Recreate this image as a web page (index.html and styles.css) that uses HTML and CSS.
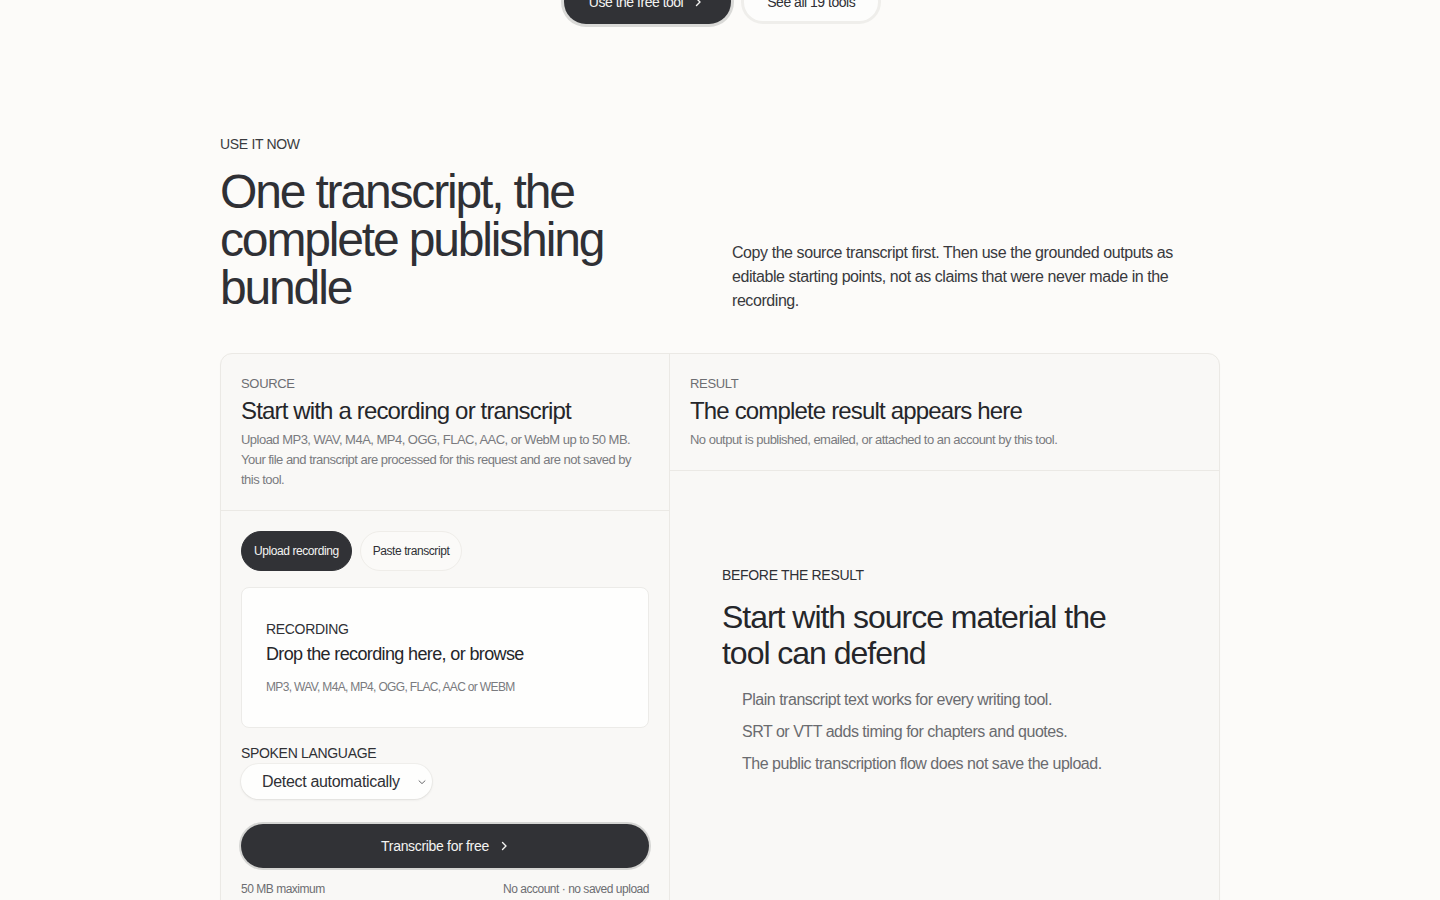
FILE: index.html
```html
<!DOCTYPE html>
<html lang="en">
<head>
<meta charset="utf-8">
<title>Use it now</title>
<link rel="stylesheet" href="styles.css">
</head>
<body>
<div class="hero-actions">
  <a class="btn btn-dark" href="#">Use the free tool <svg class="chev" width="10" height="10" viewBox="0 0 10 10"><path d="M3.5 1.5 7 5 3.5 8.5" fill="none" stroke="currentColor" stroke-width="1.4" stroke-linecap="round" stroke-linejoin="round"/></svg></a>
  <a class="btn btn-light" href="#">See all 19 tools</a>
</div>

<section class="use-now">
  <div class="intro">
    <div class="intro-left">
      <p class="eyebrow">USE IT NOW</p>
      <h1 class="title">One transcript, the complete publishing bundle</h1>
    </div>
    <p class="intro-text">Copy the source transcript first. Then use the grounded outputs as editable starting points, not as claims that were never made in the recording.</p>
  </div>

  <div class="card">
    <div class="col col-source">
      <div class="col-head">
        <p class="label">SOURCE</p>
        <h2 class="col-title">Start with a recording or transcript</h2>
        <p class="col-desc">Upload MP3, WAV, M4A, MP4, OGG, FLAC, AAC, or WebM up to 50 MB. Your file and transcript are processed for this request and are not saved by this tool.</p>
      </div>
      <div class="col-body">
        <div class="tabs">
          <button class="tab tab-active">Upload recording</button>
          <button class="tab">Paste transcript</button>
        </div>
        <div class="dropzone">
          <p class="dz-label">RECORDING</p>
          <p class="dz-title">Drop the recording here, or browse</p>
          <p class="dz-formats">MP3, WAV, M4A, MP4, OGG, FLAC, AAC or WEBM</p>
        </div>
        <p class="field-label">SPOKEN LANGUAGE</p>
        <div class="select">
          <span>Detect automatically</span>
          <svg width="10" height="10" viewBox="0 0 10 10"><path d="M2 3.8 5 6.6 8 3.8" fill="none" stroke="#6b6b6e" stroke-width="1" stroke-linecap="round" stroke-linejoin="round"/></svg>
        </div>
        <button class="submit">Transcribe for free <svg class="chev" width="10" height="10" viewBox="0 0 10 10"><path d="M3.5 1.5 7 5 3.5 8.5" fill="none" stroke="currentColor" stroke-width="1.4" stroke-linecap="round" stroke-linejoin="round"/></svg></button>
        <div class="meta">
          <span>50 MB maximum</span>
          <span>No account · no saved upload</span>
        </div>
      </div>
    </div>
    <div class="col col-result">
      <div class="col-head">
        <p class="label">RESULT</p>
        <h2 class="col-title">The complete result appears here</h2>
        <p class="col-desc">No output is published, emailed, or attached to an account by this tool.</p>
      </div>
      <div class="result-body">
        <p class="eyebrow-dark">BEFORE THE RESULT</p>
        <h3 class="result-title">Start with source material the tool can defend</h3>
        <ul class="tips">
          <li>Plain transcript text works for every writing tool.</li>
          <li>SRT or VTT adds timing for chapters and quotes.</li>
          <li>The public transcription flow does not save the upload.</li>
        </ul>
      </div>
    </div>
  </div>
</section>
</body>
</html>
```

FILE: styles.css
```css
* { box-sizing: border-box; }
html, body { margin: 0; padding: 0; }
body {
  background: #fcfbf9;
  font-family: "Liberation Sans", Arial, sans-serif;
  color: #2f3035;
  letter-spacing: -0.02em;
}
p, h1, h2, h3, ul { margin: 0; padding: 0; }
a { text-decoration: none; }
button { font-family: inherit; letter-spacing: inherit; border: 0; cursor: pointer; }

.hero-actions {
  display: flex;
  justify-content: center;
  gap: 10px;
  margin-top: -20px;
  padding-left: 5px;
}
.btn {
  display: inline-flex;
  align-items: center;
  gap: 10px;
  height: 44px;
  border-radius: 22px;
  font-size: 14px;
  white-space: nowrap;
  letter-spacing: -0.035em;
}
.btn-dark {
  background: #313236;
  color: #f4f4f2;
  padding: 0 28px 0 25px;
  box-shadow: 0 0 0 3px #d9d9d7;
}
.btn-light {
  background: #fdfdfc;
  color: #2f3035;
  padding: 0 23px;
  border: 3px solid #efeeeb;
}
.chev { flex: none; }

.use-now {
  width: 1000px;
  margin: 110px auto 0;
}
.intro {
  display: grid;
  grid-template-columns: 1fr 1fr;
  gap: 24px;
  align-items: end;
}
.eyebrow {
  font-size: 14px;
  line-height: 20px;
  color: #3a3b3f;
  margin-bottom: 14px;
}
.title {
  font-weight: 400;
  font-size: 48px;
  line-height: 48px;
  letter-spacing: -0.045em;
  color: #2f3035;
  max-width: 420px;
}
.intro-text {
  font-size: 16px;
  line-height: 24px;
  color: #38393d;
  letter-spacing: -0.027em;
  transform: translateY(1px);
}

.card {
  margin-top: 41px;
  display: grid;
  grid-template-columns: 449px 1fr;
  background: #f9f8f6;
  border: 1px solid #ebe9e5;
  border-radius: 12px;
  box-shadow: 0 1px 2px rgba(0,0,0,0.02);
}
.col-source { border-right: 1px solid #ebe9e5; }
.col-head {
  padding: 21px 20px 20px;
  border-bottom: 1px solid #ebe9e5;
}
.label {
  font-size: 13px;
  line-height: 18px;
  color: #6d6e72;
}
.col-title {
  margin-top: 3px;
  font-weight: 400;
  font-size: 24px;
  line-height: 30px;
  letter-spacing: -0.035em;
  color: #25262a;
}
.col-desc {
  margin-top: 4px;
  font-size: 13px;
  line-height: 20px;
  color: #7a7b7f;
  letter-spacing: -0.04em;
}

.col-body { padding: 20px 20px 14px; }
.tabs { display: flex; gap: 8px; }
.tab {
  height: 40px;
  border-radius: 20px;
  padding: 0 12px;
  font-size: 12px;
  letter-spacing: -0.035em;
  background: #fbfaf8;
  color: #2f3035;
  border: 1px solid #efede9;
}
.tab-active {
  background: #313236;
  color: #f4f4f2;
  border-color: #313236;
}
.dropzone {
  margin-top: 16px;
  height: 141px;
  background: #fefefd;
  border: 1px solid #ecebe8;
  border-radius: 8px;
  padding: 31px 24px 0;
}
.dz-label {
  font-size: 14px;
  line-height: 20px;
  color: #2f3035;
}
.dz-title {
  margin-top: 3px;
  font-size: 18px;
  line-height: 24px;
  letter-spacing: -0.035em;
  color: #25262a;
}
.dz-formats {
  margin-top: 13px;
  font-size: 12px;
  line-height: 16px;
  color: #7a7b7f;
  letter-spacing: -0.055em;
}
.field-label {
  margin-top: 15px;
  font-size: 14px;
  line-height: 20px;
  color: #2f3035;
}
.select {
  margin-top: 1px;
  width: 191px;
  height: 35px;
  border-radius: 18px;
  background: #fefefd;
  box-shadow: 0 1px 3px rgba(0,0,0,0.08), 0 0 0 1px #f1f0ed;
  display: flex;
  align-items: center;
  justify-content: space-between;
  padding: 0 5px 0 21px;
  font-size: 16px;
  color: #2f3035;
}
.submit {
  margin-top: 25px;
  width: 100%;
  height: 44px;
  border-radius: 22px;
  background: #313236;
  color: #f4f4f2;
  font-size: 14px;
  display: flex;
  align-items: center;
  justify-content: center;
  gap: 10px;
  box-shadow: 0 0 0 2px #d5d5d3;
}
.meta {
  margin-top: 13px;
  display: flex;
  justify-content: space-between;
  font-size: 12px;
  line-height: 16px;
  color: #6d6e72;
  letter-spacing: -0.04em;
}

.result-body {
  padding: 94px 52px 40px;
}
.eyebrow-dark {
  font-size: 14px;
  line-height: 20px;
  color: #2f3035;
}
.result-title {
  margin-top: 14px;
  font-weight: 400;
  font-size: 32px;
  line-height: 36px;
  letter-spacing: -0.032em;
  color: #25262a;
  max-width: 420px;
}
.tips {
  list-style: none;
  margin-top: 17px;
  padding-left: 20px;
  display: flex;
  flex-direction: column;
  gap: 8px;
}
.tips li {
  font-size: 16px;
  line-height: 24px;
  color: #6a6b6f;
  letter-spacing: -0.03em;
}
```
